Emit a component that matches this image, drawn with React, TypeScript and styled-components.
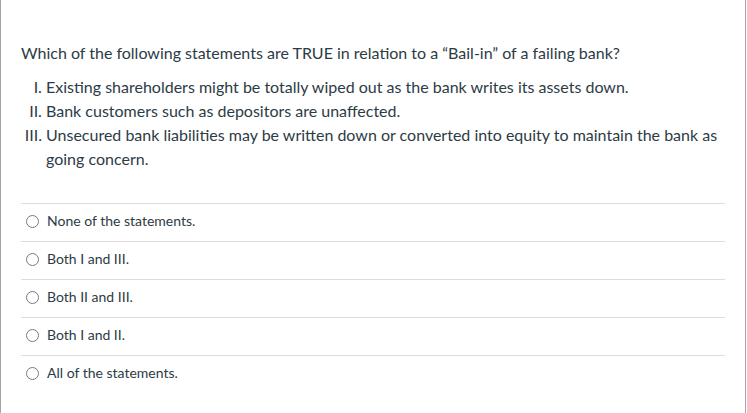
import React from 'react';
import styled, { createGlobalStyle } from 'styled-components';

const GlobalStyle = createGlobalStyle`
  html, body {
    margin: 0;
    padding: 0;
    background: #ffffff;
  }
  body {
    font-family: Lato, "Open Sans", "Liberation Sans", sans-serif;
    color: #2d3b45;
  }
`;

const QuestionFrame = styled.div`
  box-sizing: border-box;
  width: 746px;
  height: 413px;
  border-left: 1px solid #a5a5a5;
  border-right: 1px solid #a5a5a5;
  padding: 41px 20px 0 20px;
  background: #ffffff;
`;

const QuestionText = styled.p`
  margin: 0;
  font-size: 16px;
  line-height: 24px;
`;

const StatementList = styled.ol`
  list-style-type: upper-roman;
  margin: 10px 0 0 0;
  padding-left: 25px;
  font-size: 16px;
  line-height: 24px;
`;

const AnswerList = styled.div`
  margin-top: 32px;
`;

const AnswerRow = styled.label`
  display: flex;
  align-items: center;
  border-top: 1px solid #dcdcdc;
  padding: 7px 0 10px 0;
  font-size: 14px;
  line-height: 20px;
  cursor: pointer;
`;

const Radio = styled.span`
  box-sizing: border-box;
  width: 13px;
  height: 13px;
  border: 1px solid #7a7a7a;
  border-radius: 50%;
  margin: 1px 8px 0 5px;
  flex-shrink: 0;
`;

const statements = [
  'Existing shareholders might be totally wiped out as the bank writes its assets down.',
  'Bank customers such as depositors are unaffected.',
  'Unsecured bank liabilities may be written down or converted into equity to maintain the bank as going concern.',
];

const answers = [
  'None of the statements.',
  'Both I and III.',
  'Both II and III.',
  'Both I and II.',
  'All of the statements.',
];

export default function App(): JSX.Element {
  return (
    <>
      <GlobalStyle />
      <QuestionFrame>
        <QuestionText>
          Which of the following statements are TRUE in relation to a “Bail-in” of a failing bank?
        </QuestionText>
        <StatementList>
          {statements.map((s) => (
            <li key={s}>{s}</li>
          ))}
        </StatementList>
        <AnswerList>
          {answers.map((a) => (
            <AnswerRow key={a}>
              <Radio />
              {a}
            </AnswerRow>
          ))}
        </AnswerList>
      </QuestionFrame>
    </>
  );
}
